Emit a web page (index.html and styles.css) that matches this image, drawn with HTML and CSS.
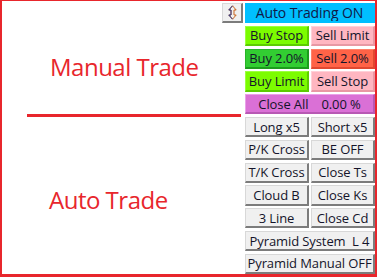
FILE: index.html
```html
<!DOCTYPE html>
<html lang="en">
  <head>
    <meta charset="UTF-8" />
    <meta name="viewport" content="width=device-width, initial-scale=1.0" />
    <title>Trade Panel</title>
    <link rel="stylesheet" href="styles.css">
  </head>
  <body>
    <div class="frame">
      <section class="zones">
        <div class="zone-title manual">Manual Trade</div>
        <div class="divider"></div>
        <div class="zone-title auto">Auto Trade</div>
      </section>

      <section class="panel">
        <button class="btn gray arrow" title="Collapse">
          <svg width="9" height="15" viewBox="0 0 9 15">
            <path d="M4.5 0.8 L8.2 5 L6 5 L6 10 L8.2 10 L4.5 14.2 L0.8 10 L3 10 L3 5 L0.8 5 Z"
                  fill="none" stroke="#c8641e" stroke-width="1" />
            <path d="M4.5 0.8 L0.8 5 L3 5 L3 10 L0.8 10 L4.5 14.2"
                  fill="none" stroke="#2a3a8c" stroke-width="1" />
          </svg>
        </button>
        <button class="btn sky wide">Auto Trading ON</button>

        <button class="btn lawn">Buy Stop</button>
        <button class="btn pink">Sell Limit</button>
        <button class="btn lime">Buy 2.0%</button>
        <button class="btn tomato">Sell 2.0%</button>
        <button class="btn lawn">Buy Limit</button>
        <button class="btn pink">Sell Stop</button>
        <button class="btn orchid wide">Close All&nbsp;&nbsp;&nbsp;&nbsp;0.00 %</button>

        <button class="btn gray">Long x5</button>
        <button class="btn gray">Short x5</button>
        <button class="btn gray">P/K Cross</button>
        <button class="btn gray">BE OFF</button>
        <button class="btn gray">T/K Cross</button>
        <button class="btn gray">Close Ts</button>
        <button class="btn gray">Cloud B</button>
        <button class="btn gray">Close Ks</button>
        <button class="btn gray">3 Line</button>
        <button class="btn gray">Close Cd</button>
        <button class="btn gray wide">Pyramid System&nbsp;&nbsp;L 4</button>
        <button class="btn gray wide">Pyramid Manual OFF</button>
      </section>
    </div>
  </body>
</html>
```

FILE: styles.css
```css
:root {
  --red: #e8262c;
  --text: #14142a;
}

* {
  box-sizing: border-box;
}

body {
  margin: 0;
  background: white;
  font-family: "Open Sans", "Noto Sans", sans-serif;
}

.frame {
  width: 377px;
  height: 277px;
  border-style: solid;
  border-color: var(--red);
  border-width: 1px 2px 3px 2px;
  display: flex;
  overflow: hidden;
}

.zones {
  width: 220px;
  flex-shrink: 0;
  display: flex;
  flex-direction: column;
}

.zone-title {
  color: var(--red);
  font-size: 24px;
  letter-spacing: -0.5px;
  line-height: 30px;
  white-space: nowrap;
}

.manual {
  margin: 51px 0 0 48px;
}

.divider {
  width: 214px;
  height: 3px;
  background: var(--red);
  margin: 32px 0 0 25px;
}

.auto {
  margin: 68px 0 0 47px;
}

.panel {
  flex: 1;
  display: grid;
  grid-template-columns: 21px 64px 64px;
  grid-template-rows: repeat(12, minmax(0, 1fr));
  gap: 2.5px 2px;
  padding-top: 2px;
}

.btn {
  margin: 0;
  padding: 0;
  min-height: 0;
  overflow: hidden;
  font-family: inherit;
  font-size: 13px;
  line-height: 16px;
  letter-spacing: -0.1px;
  color: var(--text);
  white-space: nowrap;
  text-align: center;
  border: 1px solid;
  border-width: 1px 2px 2px 1px;
}

.panel .btn:nth-child(3),
.panel .btn:nth-child(5),
.panel .btn:nth-child(7),
.panel .btn:nth-child(10),
.panel .btn:nth-child(12),
.panel .btn:nth-child(14),
.panel .btn:nth-child(16),
.panel .btn:nth-child(18) {
  grid-column: 2;
}

.wide {
  grid-column: 2 / span 2 !important;
}

.arrow {
  display: flex;
  align-items: center;
  justify-content: center;
}

.sky {
  background: #00bfff;
  border-color: #00bfff;
  font-size: 14px;
  color: #101848;
}

.lawn {
  background: #7cfc00;
  border-color: #9cff40 #5ccc00 #5ccc00 #9cff40;
}

.pink {
  background: #ffb6c1;
  border-color: #ffd0d8 #e898a4 #e898a4 #ffd0d8;
}

.lime {
  background: #32cd32;
  border-color: #28b428 #1c9c1c #1c9c1c #28b428;
}

.tomato {
  background: #ff6347;
  border-color: #ff8068 #e04830 #e04830 #ff8068;
}

.orchid {
  background: #da70d6;
  border-color: #eaa0e8 #b858b4 #b858b4 #eaa0e8;
}

.gray {
  background: #f0f0f0;
  border-color: #d8d8d8 #7c7c7c #7c7c7c #d8d8d8;
}
```
